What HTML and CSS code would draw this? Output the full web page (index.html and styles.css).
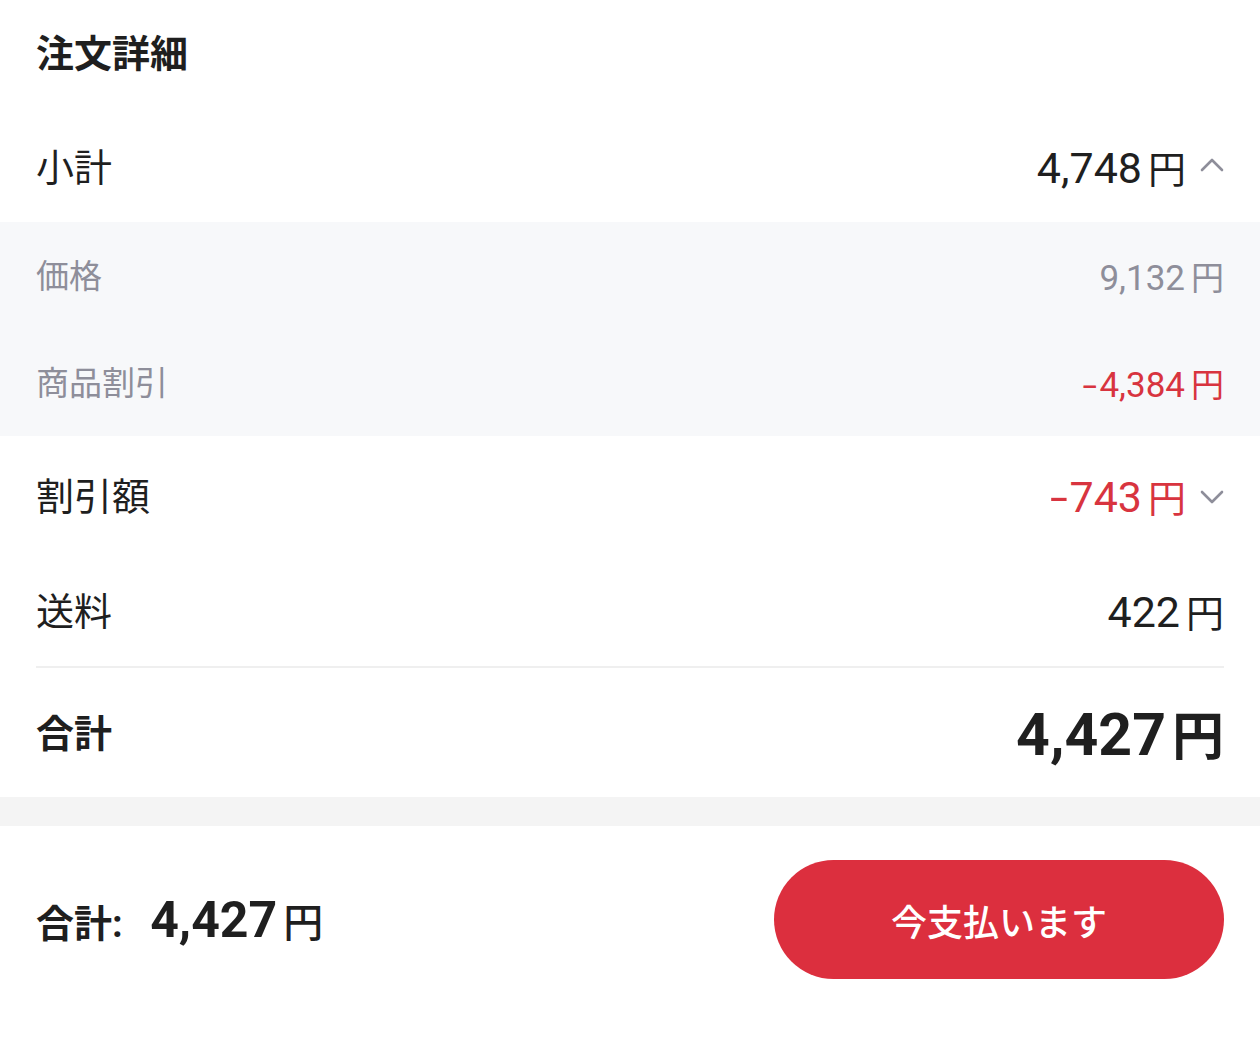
FILE: index.html
```html
<!DOCTYPE html>
<html lang="ja">

<head>
  <meta charset="UTF-8">
  <meta name="viewport" content="width=device-width, initial-scale=1.0">
  <title>注文詳細</title>
  <link rel="stylesheet" href="styles.css">
</head>

<body>

  <div class="details">
    <div class="details__title">注文詳細</div>

    <div class="row">
      <span class="row__label">小計</span>
      <span class="row__value">
        <span class="price"><span class="price__num">4,748</span><span class="price__yen">円</span></span>
        <svg class="row__chevron" viewBox="0 0 24 24" width="24" height="24">
          <path d="M2 16 L12 6 L22 16" fill="none" stroke="#8e8e9a" stroke-width="2.6" stroke-linecap="round" stroke-linejoin="round"/>
        </svg>
      </span>
    </div>

    <div class="breakdown">
      <div class="row row_sub">
        <span class="row__label">価格</span>
        <span class="row__value">
          <span class="price"><span class="price__num">9,132</span><span class="price__yen">円</span></span>
        </span>
      </div>
      <div class="row row_sub">
        <span class="row__label">商品割引</span>
        <span class="row__value row__value_red">
          <span class="price"><span class="price__sign">-</span><span class="price__num">4,384</span><span class="price__yen">円</span></span>
        </span>
      </div>
    </div>

    <div class="row row_discount">
      <span class="row__label">割引額</span>
      <span class="row__value row__value_red">
        <span class="price"><span class="price__sign">-</span><span class="price__num">743</span><span class="price__yen">円</span></span>
        <svg class="row__chevron" viewBox="0 0 24 24" width="24" height="24">
          <path d="M2 8 L12 18 L22 8" fill="none" stroke="#8e8e9a" stroke-width="2.6" stroke-linecap="round" stroke-linejoin="round"/>
        </svg>
      </span>
    </div>

    <div class="row row_shipping">
      <span class="row__label">送料</span>
      <span class="row__value">
        <span class="price"><span class="price__num">422</span><span class="price__yen">円</span></span>
      </span>
    </div>

    <div class="row row_total">
      <span class="row__label">合計</span>
      <span class="row__value">
        <span class="price"><span class="price__num">4,427</span><span class="price__yen">円</span></span>
      </span>
    </div>
  </div>

  <div class="spacer"></div>

  <div class="footer">
    <div class="footer__total">
      合計:
      <span class="price"><span class="price__num">4,427</span><span class="price__yen">円</span></span>
    </div>
    <button class="footer__button">今支払います</button>
  </div>

</body>

</html>
```

FILE: styles.css
```css
body {
  margin: 0;
  background-color: #fff;
  color: #1f1f1f;
  font-family: Roboto, "Noto Sans CJK JP", sans-serif;
}

.details {
  background-color: #fff;
}

.details__title {
  height: 110px;
  padding: 0 36px 10px;
  display: flex;
  align-items: center;
  font-size: 38px;
  font-weight: 700;
  box-sizing: border-box;
}

.row {
  display: flex;
  justify-content: space-between;
  align-items: center;
  height: 112px;
  padding: 0 36px;
  font-size: 38px;
  box-sizing: border-box;
}

.row__label {
  padding-bottom: 4px;
}

.row__value {
  display: flex;
  align-items: center;
  gap: 14px;
}

.row__value_red {
  color: #d8343f;
}

.row__chevron {
  display: block;
}

.price {
  white-space: nowrap;
}

.price__num,
.price__sign {
  font-size: 43px;
}

.price__sign {
  display: inline-block;
  transform: scaleX(1.5);
  margin: 0 5px 0 4px;
}

.price__yen {
  margin-left: 6px;
}

.breakdown {
  background-color: #f7f8fa;
}

.row_sub {
  height: 107px;
  font-size: 33px;
  color: #8e8e9a;
}

.row_sub .price__num,
.row_sub .price__sign {
  font-size: 35px;
}

.row_sub .row__value_red {
  color: #d8343f;
}

.row_discount {
  height: 119px;
}

.row_shipping {
  height: 111px;
}

.row_total {
  height: 131px;
  margin: 0 36px;
  padding: 0;
  border-top: 2px solid #efefef;
  font-weight: 700;
}

.row_total .price__num {
  font-size: 59px;
}

.row_total .price__yen {
  font-size: 52px;
}

.spacer {
  height: 29px;
  background-color: #f4f4f4;
}

.footer {
  display: flex;
  justify-content: space-between;
  align-items: center;
  padding: 34px 36px;
}

.footer__total {
  font-size: 38px;
  font-weight: 700;
}

.footer__total .price {
  margin-left: 18px;
}

.footer__total .price__num {
  font-size: 50px;
}

.footer__total .price__yen {
  font-size: 40px;
  font-weight: 500;
}

.footer__button {
  width: 450px;
  height: 119px;
  border: none;
  border-radius: 60px;
  background-color: #dc2f3e;
  color: #fff;
  font-family: Roboto, "Noto Sans CJK JP", sans-serif;
  font-size: 36px;
  font-weight: 500;
}
```
